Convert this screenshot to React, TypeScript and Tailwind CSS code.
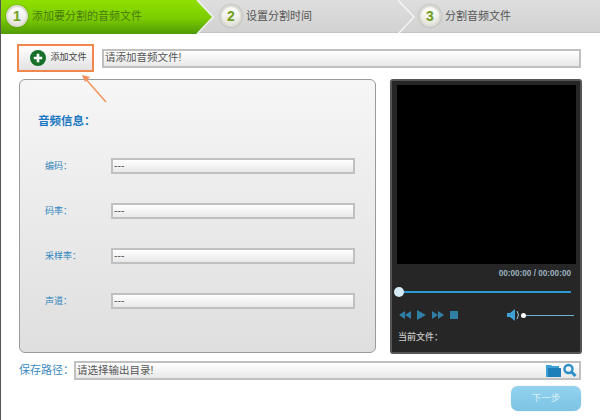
import React from "react";

const cjk = "font-['Liberation_Sans','Noto_Sans_CJK_SC',sans-serif]";

function Badge({ n }: { n: number }) {
  return (
    <span className="flex h-[22px] w-[22px] shrink-0 items-center justify-center rounded-full border-2 border-[#dcdcd4] bg-gradient-to-b from-white to-[#e4e4dc] text-[14px] leading-none font-bold text-[#6f9f1c] shadow-[0_0_2px_rgba(0,0,0,0.35)]">
      {n}
    </span>
  );
}

function Step({ n, text, cls, active }: { n: number; text: string; cls: string; active?: boolean }) {
  return (
    <div className={`flex h-full items-center gap-[4px] ${cls}`}>
      <Badge n={n} />
      <span className={`text-[11px] ${active ? "text-[#4a7a10]" : "text-[#555]"}`}>{text}</span>
    </div>
  );
}

function Field({ text, cls = "" }: { text: string; cls?: string }) {
  return (
    <div className={`flex items-center border-2 border-[#c0c0c0] bg-gradient-to-b from-white to-[#e8e8e8] pl-[1px] text-[10.5px] text-[#555] ${cls}`}>
      {text}
    </div>
  );
}

function InfoRow({ label }: { label: string }) {
  return (
    <div className="flex h-[16px] items-center">
      <span className="w-[91px] pt-[2px] pl-[25px] text-[9px] text-[#2f84bd]">{label}</span>
      <Field text="---" cls="h-[16px] w-[244px] text-[9px]" />
    </div>
  );
}

export default function App() {
  return (
    <div className={`relative h-[420px] w-[600px] overflow-hidden border-l border-[#555] bg-white ${cjk}`}>
      {/* step bar */}
      <div className="relative flex h-[33px] items-center border-b border-[#c4c4c4] bg-gradient-to-b from-[#dedede] to-[#d2d2d2]">
        <svg className="absolute top-0 left-[-1px]" width="601" height="34" viewBox="0 0 601 34">
          <defs>
            <linearGradient id="g" x1="0" y1="0" x2="0" y2="1">
              <stop offset="0" stopColor="#8fe000" />
              <stop offset="0.55" stopColor="#7ccc00" />
              <stop offset="1" stopColor="#4f9a06" />
            </linearGradient>
          </defs>
          <polygon points="0,0 197,0 213,17 197,34 0,34" fill="url(#g)" />
          <polyline points="197,0 213,17 197,34" fill="none" stroke="#f2f2f2" strokeWidth="1.5" />
          <polyline points="398,0 414,17 398,34" fill="none" stroke="#f4f4f4" strokeWidth="1.5" />
        </svg>
        <Step n={1} text="添加要分割的音频文件" active cls="relative w-[219px] pl-[5px]" />
        <Step n={2} text="设置分割时间" cls="relative w-[199px]" />
        <Step n={3} text="分割音频文件" cls="relative" />
      </div>

      <div className="pr-[19px] pl-[16px]">
        {/* file row */}
        <div className="mt-[11px] flex h-[28px] items-center">
          <button className="flex h-[28px] w-[77px] items-center justify-center gap-[4px] border-2 border-[#f0884e] bg-gradient-to-b from-white to-[#e2e2e2] pl-[6px] text-[9px] text-[#444]">
            <svg width="16" height="16" viewBox="0 0 16 16">
              <circle cx="8" cy="8" r="8" fill="#17702a" />
              <path d="M8 3.8v8.4M3.8 8h8.4" stroke="#fff" strokeWidth="2.6" />
            </svg>
            添加文件
          </button>
          <Field text="请添加音频文件!" cls="ml-[8px] h-[19px] w-[479px] pl-[1px]" />
        </div>

        <svg className="absolute top-[74px] left-[79px]" width="30" height="32" viewBox="0 0 30 32">
          <path d="M26 28 3 2" stroke="#f4915a" strokeWidth="1.4" fill="none" />
          <path d="M2 1l8 2-5 5z" fill="#f4915a" />
        </svg>

        {/* panels */}
        <div className="mt-[7px] flex items-start">
          <div className="ml-[2px] h-[274px] w-[357px] shrink-0 rounded-[6px] border border-[#9a9a9a] bg-gradient-to-b from-[#f6f6f6] to-[#dfdfdf]">
            <div className="mt-[33px] pl-[18px] text-[11.5px] leading-[16px] font-bold text-[#1a78c2]">音频信息：</div>
            <div className="mt-[29px] flex flex-col gap-[29px]">
              <InfoRow label="编码：" />
              <InfoRow label="码率：" />
              <InfoRow label="采样率：" />
              <InfoRow label="声道：" />
            </div>
          </div>

          <div className="ml-[14px] flex h-[275px] w-[192px] shrink-0 flex-col rounded-[3px] border-[2px] border-[#555] bg-[#262626]">
            <div className="mt-[4px] mr-[4px] ml-[5px] h-[179px] shrink-0 bg-black" />
            <div className="mt-[4px] pr-[9px] text-right text-[8.2px] leading-[12px] font-bold text-[#9db2c0]">00:00:00 / 00:00:00</div>
            <div className="relative mt-[7px] mr-[9px] ml-[7px] flex h-[10px] items-center">
              <div className="h-[2px] w-full bg-[#2c9ad0]" />
              <div className="absolute left-[-5px] h-[10px] w-[10px] rounded-full bg-[#d6ebf6]" />
            </div>
            <div className="mt-[12px] flex h-[12px] items-center pl-[7px]">
              <svg width="60" height="12" viewBox="0 0 60 12" fill="#2f7fa6">
                <path d="M6 2v8L0 6zM12 2v8L6 6z" />
                <path d="M18 1l9 5-9 5z" />
                <path d="M33 2v8l6-4zM39 2v8l6-4z" />
                <rect x="51" y="2" width="8" height="8" />
              </svg>
              <svg className="ml-[48px]" width="14" height="12" viewBox="0 0 14 12">
                <path d="M0 4h3l5-4v12L3 8H0z" fill="#3fa2d6" />
                <path d="M10 2q3 4 0 8" fill="none" stroke="#9fc6da" strokeWidth="1" />
              </svg>
              <span className="relative flex h-[6px] w-[53px] items-center">
                <span className="h-[1px] w-full bg-[#6fb3d3]" />
                <span className="absolute left-0 h-[5px] w-[5px] rounded-full bg-white" />
              </span>
            </div>
            <div className="mt-[10px] pl-[6px] text-[9px] leading-[12px] font-medium text-[#c8c8c8]">当前文件：</div>
          </div>
        </div>

        {/* save row */}
        <div className="mt-[7px] flex h-[19px] items-center">
          <span className="ml-[2px] w-[55px] text-[11px] text-[#3a8ac0]">保存路径：</span>
          <div className="relative h-[19px] w-[507px]">
            <Field text="请选择输出目录!" cls="h-full w-full pl-[1px]" />
            <svg className="absolute top-[2px] right-[3px]" width="32" height="15" viewBox="0 0 32 15">
              <path d="M0 2h5l1 1h7v11H0z" fill="#3da0d8" />
              <path d="M2 5h13v9H2z" fill="#1f7fb8" />
              <circle cx="22.5" cy="6" r="4" fill="none" stroke="#2a8fc8" strokeWidth="2.4" />
              <path d="M25.5 9l4 4" stroke="#2a8fc8" strokeWidth="3" />
            </svg>
          </div>
        </div>

        {/* next */}
        <div className="mt-[6px] flex justify-end">
          <button className="h-[25px] w-[70px] rounded-[7px] bg-gradient-to-b from-[#92d3ef] to-[#7cc3e4] text-[9.5px] text-[#d7eff9] shadow-[0_0_1px_rgba(0,0,0,0.3)]">下一步</button>
        </div>
      </div>
    </div>
  );
}
